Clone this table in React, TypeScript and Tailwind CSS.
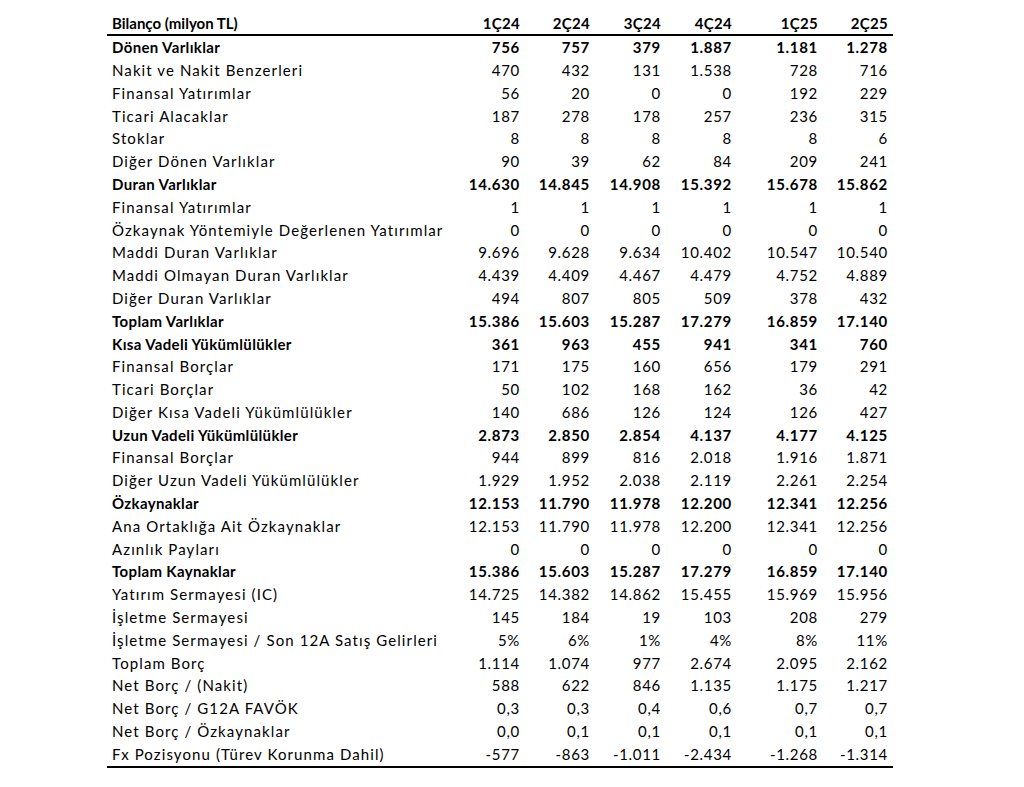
import React from "react";

type Row = { label: string; values: string[]; bold?: boolean };

const rows: Row[] = [
  { label: "Dönen Varlıklar", values: ["756", "757", "379", "1.887", "1.181", "1.278"], bold: true },
  { label: "Nakit ve Nakit Benzerleri", values: ["470", "432", "131", "1.538", "728", "716"] },
  { label: "Finansal Yatırımlar", values: ["56", "20", "0", "0", "192", "229"] },
  { label: "Ticari Alacaklar", values: ["187", "278", "178", "257", "236", "315"] },
  { label: "Stoklar", values: ["8", "8", "8", "8", "8", "6"] },
  { label: "Diğer Dönen Varlıklar", values: ["90", "39", "62", "84", "209", "241"] },
  { label: "Duran Varlıklar", values: ["14.630", "14.845", "14.908", "15.392", "15.678", "15.862"], bold: true },
  { label: "Finansal Yatırımlar", values: ["1", "1", "1", "1", "1", "1"] },
  { label: "Özkaynak Yöntemiyle Değerlenen Yatırımlar", values: ["0", "0", "0", "0", "0", "0"] },
  { label: "Maddi Duran Varlıklar", values: ["9.696", "9.628", "9.634", "10.402", "10.547", "10.540"] },
  { label: "Maddi Olmayan Duran Varlıklar", values: ["4.439", "4.409", "4.467", "4.479", "4.752", "4.889"] },
  { label: "Diğer Duran Varlıklar", values: ["494", "807", "805", "509", "378", "432"] },
  { label: "Toplam Varlıklar", values: ["15.386", "15.603", "15.287", "17.279", "16.859", "17.140"], bold: true },
  { label: "Kısa Vadeli Yükümlülükler", values: ["361", "963", "455", "941", "341", "760"], bold: true },
  { label: "Finansal Borçlar", values: ["171", "175", "160", "656", "179", "291"] },
  { label: "Ticari Borçlar", values: ["50", "102", "168", "162", "36", "42"] },
  { label: "Diğer Kısa Vadeli Yükümlülükler", values: ["140", "686", "126", "124", "126", "427"] },
  { label: "Uzun Vadeli Yükümlülükler", values: ["2.873", "2.850", "2.854", "4.137", "4.177", "4.125"], bold: true },
  { label: "Finansal Borçlar", values: ["944", "899", "816", "2.018", "1.916", "1.871"] },
  { label: "Diğer Uzun Vadeli Yükümlülükler", values: ["1.929", "1.952", "2.038", "2.119", "2.261", "2.254"] },
  { label: "Özkaynaklar", values: ["12.153", "11.790", "11.978", "12.200", "12.341", "12.256"], bold: true },
  { label: "Ana Ortaklığa Ait Özkaynaklar", values: ["12.153", "11.790", "11.978", "12.200", "12.341", "12.256"] },
  { label: "Azınlık Payları", values: ["0", "0", "0", "0", "0", "0"] },
  { label: "Toplam Kaynaklar", values: ["15.386", "15.603", "15.287", "17.279", "16.859", "17.140"], bold: true },
  { label: "Yatırım Sermayesi (IC)", values: ["14.725", "14.382", "14.862", "15.455", "15.969", "15.956"] },
  { label: "İşletme Sermayesi", values: ["145", "184", "19", "103", "208", "279"] },
  { label: "İşletme Sermayesi / Son 12A Satış Gelirleri", values: ["5%", "6%", "1%", "4%", "8%", "11%"] },
  { label: "Toplam Borç", values: ["1.114", "1.074", "977", "2.674", "2.095", "2.162"] },
  { label: "Net Borç / (Nakit)", values: ["588", "622", "846", "1.135", "1.175", "1.217"] },
  { label: "Net Borç / G12A FAVÖK", values: ["0,3", "0,3", "0,4", "0,6", "0,7", "0,7"] },
  { label: "Net Borç / Özkaynaklar", values: ["0,0", "0,1", "0,1", "0,1", "0,1", "0,1"] },
  { label: "Fx Pozisyonu (Türev Korunma Dahil)", values: ["-577", "-863", "-1.011", "-2.434", "-1.268", "-1.314"] },
];

const headers = ["1Ç24", "2Ç24", "3Ç24", "4Ç24", "1Ç25", "2Ç25"];

const grid = "grid grid-cols-[343px_70px_70px_71px_71px_86px_70px] pr-[5px]";

export default function App() {
  return (
    <div className="min-h-[787px] bg-white text-black font-['Lato','Open_Sans',sans-serif] text-[15px]">
      <div className="ml-[107px] w-[786px] pt-[13px]">
        <div className={`${grid} h-[23px] items-start border-b-2 border-black font-bold`}>
          <div className="pl-[5px] leading-[20px]">Bilanço (milyon TL)</div>
          {headers.map((h) => (
            <div key={h} className="text-right leading-[20px] tracking-[0.3px]">{h}</div>
          ))}
        </div>
        <div className="border-b-2 border-black">
          {rows.map((r, i) => (
            <div key={i} className={`${grid} h-[22.8px] items-center ${r.bold ? "font-bold" : ""}`}>
              <div className={`pl-[5px] whitespace-nowrap ${r.bold ? "tracking-[0.35px]" : "tracking-[1.1px]"}`}>{r.label}</div>
              {r.values.map((v, j) => (
                <div key={j} className="text-right tracking-[0.7px]">{v}</div>
              ))}
            </div>
          ))}
        </div>
      </div>
    </div>
  );
}
